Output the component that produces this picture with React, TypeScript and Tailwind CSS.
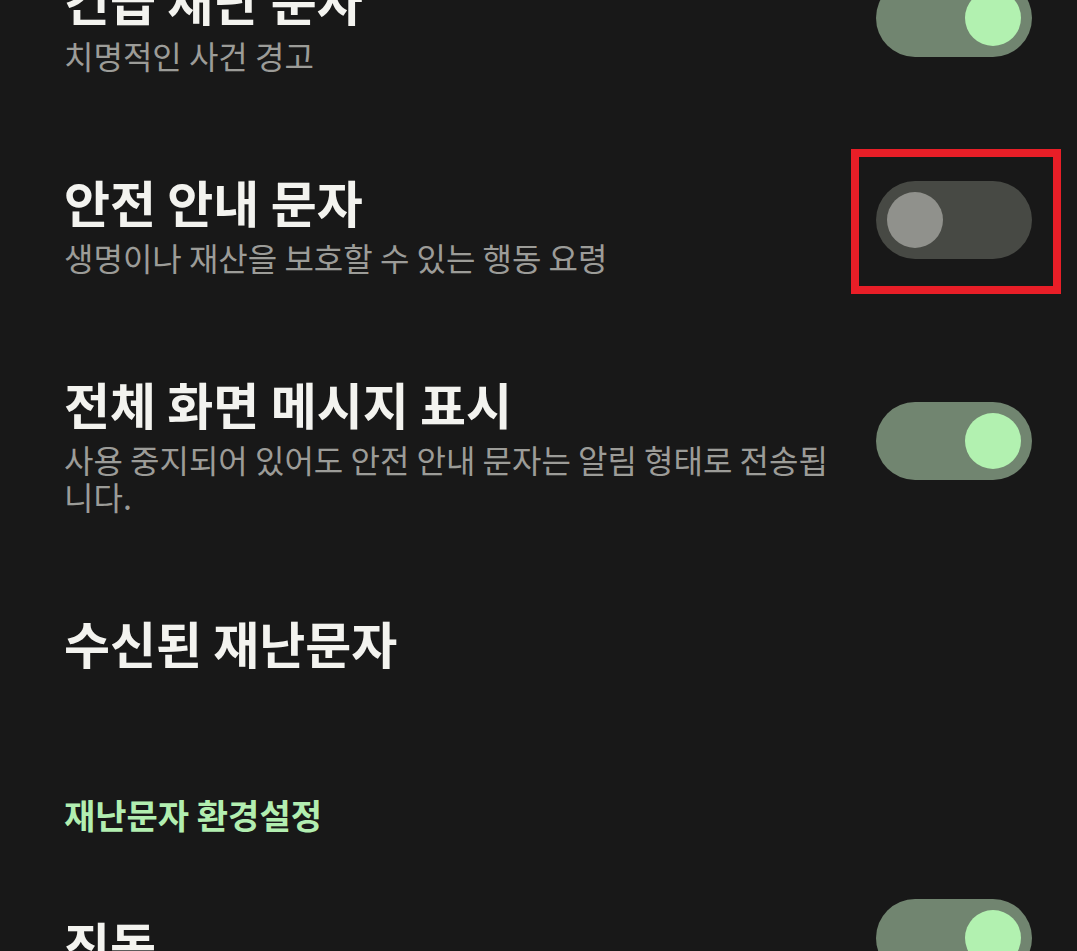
import type { FC } from "react";

type Row = {
  title: string;
  desc?: string;
  on?: boolean;
  marked?: boolean;
};

const alertRows: Row[] = [
  { title: "긴급 재난 문자", desc: "치명적인 사건 경고", on: true },
  {
    title: "안전 안내 문자",
    desc: "생명이나 재산을 보호할 수 있는 행동 요령",
    on: false,
    marked: true,
  },
  {
    title: "전체 화면 메시지 표시",
    desc: "사용 중지되어 있어도 안전 안내 문자는 알림 형태로 전송됩니다.",
    on: true,
  },
];

const Toggle: FC<{ on: boolean; marked?: boolean }> = ({ on, marked }) => (
  <div className="relative mb-[10px] shrink-0">
    <div
      className={`w-[156px] h-[78px] rounded-full flex items-center px-[11px] ${
        on ? "bg-[#718570] justify-end" : "bg-[#474944] justify-start"
      }`}
    >
      <span
        className={`w-[56px] h-[56px] rounded-full ${
          on ? "bg-[#b2f1b0]" : "bg-[#90918c]"
        }`}
      />
    </div>
    {/* annotation box */}
    {marked && (
      <div className="absolute -left-[25px] -right-[29px] -top-[32px] -bottom-[35px] border-[8px] border-[#e81e27] pointer-events-none" />
    )}
  </div>
);

const SettingRow: FC<{ row: Row }> = ({ row }) => (
  <div className="flex items-center pl-[64px] pr-[45px] py-[50px]">
    <div className="flex-1 pr-[32px]">
      <div className="text-[50px] leading-[55px] font-bold text-[#f3f3ef]">
        {row.title}
      </div>
      {row.desc && (
        <div className="mt-[10px] text-[32px] leading-[37px] text-[#9c9c98]">
          {row.desc}
        </div>
      )}
    </div>
    {row.on !== undefined && <Toggle on={row.on} marked={row.marked} />}
  </div>
);

export default function App() {
  return (
    <div
      className="h-[951px] w-full overflow-hidden bg-[#181818]"
      style={{ fontFamily: '"Noto Sans CJK KR", "Noto Sans", sans-serif' }}
    >
      <div className="-mt-[78px]">
        {alertRows.map((r) => (
          <SettingRow key={r.title} row={r} />
        ))}

        <SettingRow row={{ title: "수신된 재난문자" }} />

        {/* preferences */}
        <div className="pl-[64px] pt-[75px] pb-[14px] text-[34px] leading-[40px] font-bold text-[#b2eeb0]">
          재난문자 환경설정
        </div>

        <SettingRow row={{ title: "진동", on: true }} />
      </div>
    </div>
  );
}
